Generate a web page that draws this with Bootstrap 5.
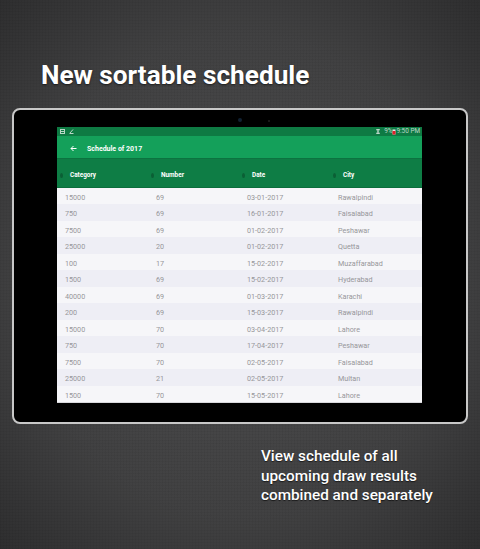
<!DOCTYPE html>
<html lang="en">
<head>
<meta charset="utf-8">
<title>New sortable schedule</title>
<link href="https://cdn.jsdelivr.net/npm/bootstrap@5.3.0/dist/css/bootstrap.min.css" rel="stylesheet">
<style>
html,body{height:549px;overflow:hidden}
body{width:480px;font-family:Roboto,"Liberation Sans",sans-serif;color:#fff;
 background-color:#3a3a3b;
 background-image:repeating-linear-gradient(0deg,rgba(0,0,0,.04) 0 1px,transparent 1px 3px),repeating-linear-gradient(90deg,rgba(0,0,0,.04) 0 1px,transparent 1px 3px),radial-gradient(ellipse 360px 400px at 50% 50%,#4d4d4e 0,#414142 60%,#2c2c2d 100%);}
.shot-head{height:108px;padding:60px 0 0 41px;font-size:26.2px;line-height:30px;font-weight:700;text-shadow:0 1px 2px rgba(0,0,0,.6)}
.tablet{width:456px;height:316px;margin-left:12px;padding:17px 0 0 43px;background:#000;border:2px solid #c8c8c8;border-radius:8px}
.cam{width:4px;height:4px;top:8px;left:224px;background:#123;border-radius:50%;box-shadow:29px 1px 0 -1px #222}
.screen{width:365px;height:276px;background:#f6f6f9;border-bottom:1px solid #d8d8dc}
.sbar{height:9px;background:#0e7a43;padding:0 2px 0 3px;font-size:6.4px;line-height:9px;color:#bcd6c8}
.abar{height:23px;background:#14a05a;padding:4px 0 0 13px;font-size:7px;font-weight:700;gap:10px}
.thead-g{height:31px;background:#0e7d45;border-top:1px solid #0c7340;border-bottom:1px solid #0b6e3c;font-size:6.4px;font-weight:700;padding-top:6px}
.cell{width:91px;flex:none}
.thead-g .cell{padding-left:13px;position:relative}
.sort-dot{position:absolute;left:3px;top:50%;width:3px;height:5px;margin-top:-2.5px;background:#0b5f35;border-radius:50%}
.trow{height:16.5px;font-size:7.2px;color:#96969a;line-height:20px;background:#f6f6f9}
.trow:nth-child(even){background:#eeeef5}
.trow .cell{padding-left:8px}
.caption{padding:23px 0 0 261px;font-size:15.3px;line-height:19.5px;font-weight:500;text-shadow:0 1px 1px rgba(0,0,0,.6)}
</style>
</head>
<body>
<h1 class="shot-head m-0">New sortable schedule</h1>
<div class="tablet position-relative">
 <div class="cam position-absolute"></div>
 <div class="screen d-flex flex-column overflow-hidden">
  <div class="sbar d-flex align-items-center justify-content-between">
   <div class="d-flex align-items-center gap-1">
    <svg width="5" height="5" viewBox="0 0 5 5"><rect x=".5" y=".5" width="4" height="4" fill="none" stroke="#b9d6c6"/><rect x="1" y="2" width="3" height="1" fill="#b9d6c6"/></svg>
    <svg width="5" height="5" viewBox="0 0 5 5"><path d="M.5 4.5h4M1 4l3-3.5" fill="none" stroke="#b9d6c6"/></svg>
   </div>
   <div class="d-flex align-items-center">
    <svg class="me-1" width="4" height="5" viewBox="0 0 4 5"><path d="M.5.5h3L.5 4.5h3z" fill="none" stroke="#bcd6c8"/></svg>
    <span>9%</span>
    <svg width="4" height="6" viewBox="0 0 4 6"><rect x=".5" y=".5" width="3" height="5" fill="#e8e8e8"/><rect x=".5" y="2" width="3" height="3.5" fill="#e0202a"/></svg>
    <span>9:50 PM</span>
   </div>
  </div>
  <div class="abar d-flex align-items-center">
   <svg width="7" height="7" viewBox="0 0 7 7"><path d="M6.5 3.5H1M3.5 1 1 3.5 3.5 6" fill="none" stroke="#fff" stroke-width="1"/></svg>
   <span>Schedule of 2017</span>
  </div>
  <div class="thead-g d-flex align-items-center">
   <div class="cell"><i class="sort-dot"></i>Category</div>
   <div class="cell"><i class="sort-dot"></i>Number</div>
   <div class="cell"><i class="sort-dot"></i>Date</div>
   <div class="cell"><i class="sort-dot"></i>City</div>
  </div>
  <div class="tbody-g">
   <div class="trow d-flex"><div class="cell">15000</div><div class="cell">69</div><div class="cell">03-01-2017</div><div class="cell">Rawalpindi</div></div>
   <div class="trow d-flex"><div class="cell">750</div><div class="cell">69</div><div class="cell">16-01-2017</div><div class="cell">Faisalabad</div></div>
   <div class="trow d-flex"><div class="cell">7500</div><div class="cell">69</div><div class="cell">01-02-2017</div><div class="cell">Peshawar</div></div>
   <div class="trow d-flex"><div class="cell">25000</div><div class="cell">20</div><div class="cell">01-02-2017</div><div class="cell">Quetta</div></div>
   <div class="trow d-flex"><div class="cell">100</div><div class="cell">17</div><div class="cell">15-02-2017</div><div class="cell">Muzaffarabad</div></div>
   <div class="trow d-flex"><div class="cell">1500</div><div class="cell">69</div><div class="cell">15-02-2017</div><div class="cell">Hyderabad</div></div>
   <div class="trow d-flex"><div class="cell">40000</div><div class="cell">69</div><div class="cell">01-03-2017</div><div class="cell">Karachi</div></div>
   <div class="trow d-flex"><div class="cell">200</div><div class="cell">69</div><div class="cell">15-03-2017</div><div class="cell">Rawalpindi</div></div>
   <div class="trow d-flex"><div class="cell">15000</div><div class="cell">70</div><div class="cell">03-04-2017</div><div class="cell">Lahore</div></div>
   <div class="trow d-flex"><div class="cell">750</div><div class="cell">70</div><div class="cell">17-04-2017</div><div class="cell">Peshawar</div></div>
   <div class="trow d-flex"><div class="cell">7500</div><div class="cell">70</div><div class="cell">02-05-2017</div><div class="cell">Faisalabad</div></div>
   <div class="trow d-flex"><div class="cell">25000</div><div class="cell">21</div><div class="cell">02-05-2017</div><div class="cell">Multan</div></div>
   <div class="trow d-flex"><div class="cell">1500</div><div class="cell">70</div><div class="cell">15-05-2017</div><div class="cell">Lahore</div></div>
  </div>
 </div>
</div>
<p class="caption m-0">View schedule of all<br>upcoming draw results<br>combined and separately</p>
</body>
</html>
